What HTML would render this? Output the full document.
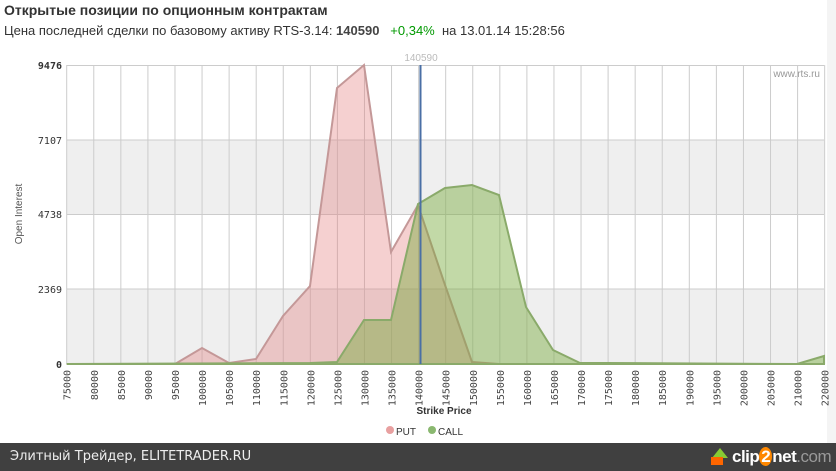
<!DOCTYPE html><html><head><meta charset="utf-8"><style>
body{margin:0;width:836px;height:471px;overflow:hidden;background:#fff;font-family:"Liberation Sans",sans-serif;position:relative}
.t{position:absolute;left:4px;top:2px;font-size:14px;font-weight:bold;color:#333}
.s{position:absolute;left:4px;top:23px;font-size:13px;color:#333}
.f{position:absolute;left:0;top:443px;width:836px;height:28px;background:#404040;color:#eee;font-size:13px;line-height:28px;font-family:"DejaVu Sans",sans-serif}
.rm{position:absolute;left:827px;top:0;width:9px;height:443px;background:#f4f4f4}
</style></head><body>
<div class="rm"></div>
<div class="t">Открытые позиции по опционным контрактам</div>
<div class="s">Цена последней сделки по базовому активу RTS-3.14: <b style="color:#444">140590</b> &nbsp; <span style="color:#090">+0,34%</span> &nbsp;на 13.01.14 15:28:56</div>
<svg style="position:absolute;left:0;top:0" width="836" height="443" font-family="Liberation Sans,sans-serif">
<rect x="66.7" y="140" width="758" height="74" fill="#efefef"/>
<rect x="66.7" y="289" width="758" height="75" fill="#efefef"/>
<g stroke="#ccc" stroke-width="1">
<line x1="66.7" y1="65.5" x2="824" y2="65.5"/><line x1="66.7" y1="140" x2="824" y2="140"/><line x1="66.7" y1="214.5" x2="824" y2="214.5"/><line x1="66.7" y1="289" x2="824" y2="289"/>
</g>
<g stroke="#ccc" id="vl"></g>
<polygon fill="rgba(225,120,120,0.35)" stroke="#c49898" stroke-width="2" points="66.7,364 175,364 202,348 229,363 256,359 283,316 310,286 337,88 364,65 391,252 418,205 445,285 472,362 499,364 824,364"/>
<polygon fill="rgba(120,170,60,0.45)" stroke="#8aaa6a" stroke-width="2" points="66.7,364 310,363 337,362 364,320 391,320 418,204 445,188 472,185 499,195 526,307 553,350 580,363 607,363 797,364 824,356 824,364"/>
<line x1="420.5" y1="65" x2="420.5" y2="364" stroke="#4a6fa5" stroke-width="2"/>
<text x="421" y="61" font-size="10" fill="#bbb" text-anchor="middle">140590</text>
<text x="820" y="77" font-size="10" fill="#999" text-anchor="end">www.rts.ru</text>
<g font-size="10" fill="#333" text-anchor="end" font-family="DejaVu Sans Mono,monospace">
<text x="62" y="69" font-weight="bold">9476</text><text x="62" y="144">7107</text><text x="62" y="218">4738</text><text x="62" y="293">2369</text><text x="62" y="368" font-weight="bold">0</text>
</g>
<text transform="translate(22,214) rotate(-90)" font-size="10" fill="#555" text-anchor="middle">Open Interest</text>
<g id="xl" font-size="10" fill="#444" font-family="DejaVu Sans Mono,monospace"></g>
<text x="444" y="414" font-size="10" font-weight="bold" fill="#333" text-anchor="middle">Strike Price</text>
<circle cx="390" cy="430" r="4" fill="#e8a0a0"/><text x="396" y="435" font-size="10" fill="#333">PUT</text>
<circle cx="432" cy="430" r="4" fill="#8ab870"/><text x="438" y="435" font-size="10" fill="#333">CALL</text>
</svg>
<div class="f"><span style="padding-left:10px">Элитный Трейдер, ELITETRADER.RU</span>
<span style="position:absolute;left:732px;top:0;font-size:17px;font-weight:bold;color:#fff;font-family:'Liberation Sans',sans-serif;letter-spacing:-0.5px">clip<span style="color:#fff;background:#f80;border-radius:50%;padding:0 2px">2</span>net<span style="color:#999;font-weight:normal">.com</span></span>
<span style="position:absolute;left:712px;top:5px;width:0;height:0;border-left:8px solid transparent;border-right:8px solid transparent;border-bottom:10px solid #8c3"></span>
<span style="position:absolute;left:711px;top:14px;width:12px;height:8px;background:#f60"></span>
</div>
<script>
var vl=document.getElementById('vl'),xl=document.getElementById('xl'),ns='http://www.w3.org/2000/svg';
for(var i=0;i<29;i++){var x=66.7+i*27.07;var l=document.createElementNS(ns,'line');l.setAttribute('x1',x);l.setAttribute('x2',x);l.setAttribute('y1',65);l.setAttribute('y2',364);vl.appendChild(l);
var t=document.createElementNS(ns,'text');t.setAttribute('transform','translate('+(x+4)+',370) rotate(-90)');t.setAttribute('text-anchor','end');t.textContent=(i==28?220000:75000+i*5000);xl.appendChild(t);}
</script>
</body></html>
